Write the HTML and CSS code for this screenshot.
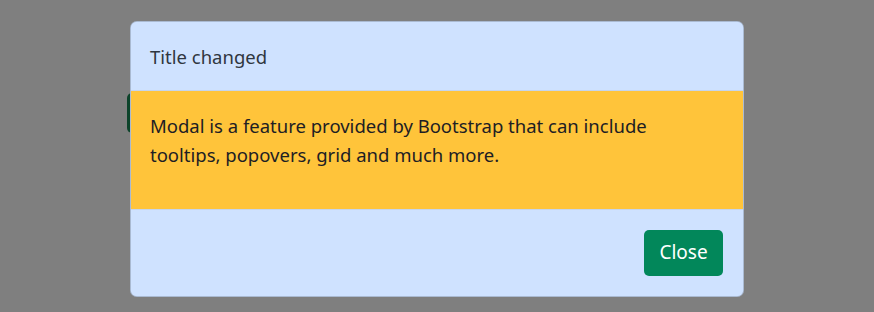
FILE: index.html
```html
<!DOCTYPE html>
<html lang="en">
<head>
    <meta charset="UTF-8">
    <meta name="viewport" content="width=device-width, initial-scale=1.0">
    <title>Modal</title>
    <link rel="stylesheet" href="styles.css">
</head>
<body>
    <div class="page">
        <div class="launch-btn"></div>
    </div>

    <div class="backdrop"></div>

    <div class="modal">
        <div class="modal-dialog">
            <div class="modal-content">
                <div class="modal-header">
                    <h1 class="modal-title">Title changed</h1>
                </div>
                <div class="modal-body">
                    <p>Modal is a feature provided by Bootstrap that can include tooltips, popovers, grid and much more.</p>
                </div>
                <div class="modal-footer">
                    <button class="btn-close-modal">Close</button>
                </div>
            </div>
        </div>
    </div>
</body>
</html>
```

FILE: styles.css
```css
* {
    margin: 0;
    padding: 0;
    box-sizing: border-box;
}

body {
    font-family: "Noto Sans", "Open Sans", sans-serif;
    font-size: 18.5px;
    line-height: 29.4px;
    color: #1d2024;
    background: #fff;
    overflow: hidden;
}

.page {
    padding: 93px 0 0 127px;
}

.launch-btn {
    background: #198754;
    height: 40px;
    width: 120px;
    border-radius: 5px;
}

.backdrop {
    position: fixed;
    inset: 0;
    background: rgba(0, 0, 0, 0.5);
    z-index: 1;
}

.modal {
    position: fixed;
    inset: 0;
    z-index: 2;
}

.modal-dialog {
    width: 614px;
    margin: 21px 0 0 130px;
}

.modal-content {
    display: flex;
    flex-direction: column;
    border: 1px solid rgba(0, 0, 0, 0.175);
    border-radius: 7px;
    overflow: hidden;
    background: #cfe2ff;
}

.modal-header {
    background: #cfe2ff;
    padding: 20px 19px 19px;
    border-bottom: 1px solid #c6d5ec;
}

.modal-title {
    font-size: 18.5px;
    font-weight: 400;
    line-height: 29.4px;
    color: #2f3640;
}

.modal-body {
    background: #ffc43a;
    padding: 19.6px 19px;
}

.modal-body p {
    max-width: 540px;
    margin-bottom: 19.6px;
}

.modal-footer {
    display: flex;
    justify-content: flex-end;
    background: #cfe2ff;
    border-top: 1px solid #c6d5ec;
    padding: 15px;
}

.btn-close-modal {
    margin: 5px;
    background: #02875a;
    color: #fff;
    font-family: inherit;
    font-size: 19px;
    line-height: 29.4px;
    border: 1px solid transparent;
    border-radius: 5px;
    height: 46px;
    width: 79px;
    cursor: pointer;
}
```
